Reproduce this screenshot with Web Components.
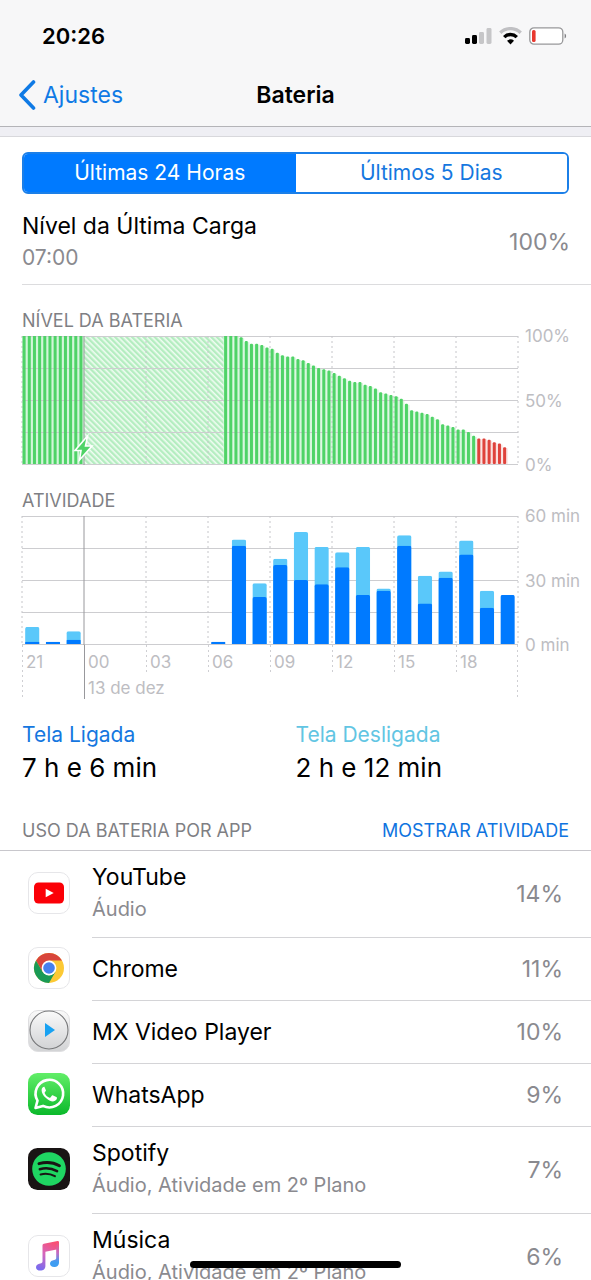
<!DOCTYPE html>
<html lang="pt-BR">
<head>
<meta charset="utf-8">
<meta name="viewport" content="width=device-width, initial-scale=1">
<title>Bateria</title>
<style>
  body { margin: 0; background: #fff; color: #000; font-family: Inter, "Liberation Sans", sans-serif; }
</style>
</head>
<body>
<battery-screen></battery-screen>

<template id="battery-screen">
  <style>
    :host { display: flex; flex-direction: column; height: 100vh; overflow: hidden; }
    main { flex: 1; min-height: 0; overflow-y: auto; scrollbar-width: none; }
    .band { height: 9px; background: #efeff4; border-bottom: 1px solid #d8d8dc; }
    .seg { padding: 15px 22px 0; }
    .section-head { display: flex; justify-content: space-between; align-items: baseline; padding: 32px 22px 7px; border-bottom: 1px solid #c8c7cc; }
    h2, .section-head button { margin: 0; font: 400 18px/24px Inter, "Liberation Sans", sans-serif; color: #7f7f84; }
    .section-head button { padding: 0; border: 0; background: none; color: #0f74e0; }
    .totals { display: grid; grid-template-columns: 1fr 1fr; padding: 22px 22px 0; }
    .home { position: fixed; bottom: 12px; left: 0; right: 0; margin: 0 auto; width: 211px; height: 7px; border-radius: 4px; background: #000; }
  </style>
  <nav-header></nav-header>
  <main>
    <div class="band"></div>
    <div class="seg"><segmented-control></segmented-control></div>
    <charge-summary><span slot="title">Nível da Última Carga</span><span slot="time">07:00</span><span slot="value">100%</span></charge-summary>
    <level-chart></level-chart>
    <activity-chart></activity-chart>
    <div class="totals">
      <usage-total tone="on"><span slot="label">Tela Ligada</span>7 h e 6 min</usage-total>
      <usage-total tone="off"><span slot="label">Tela Desligada</span>2 h e 12 min</usage-total>
    </div>
    <div class="section-head"><h2>USO DA BATERIA POR APP</h2><button type="button">MOSTRAR ATIVIDADE</button></div>
    <div role="list">
      <app-row role="listitem"><app-icon slot="icon" name="youtube"></app-icon>YouTube<span slot="detail">Áudio</span><span slot="value">14%</span></app-row>
      <app-row role="listitem"><app-icon slot="icon" name="chrome"></app-icon>Chrome<span slot="value">11%</span></app-row>
      <app-row role="listitem"><app-icon slot="icon" name="mx"></app-icon>MX Video Player<span slot="value">10%</span></app-row>
      <app-row role="listitem"><app-icon slot="icon" name="whatsapp"></app-icon>WhatsApp<span slot="value">9%</span></app-row>
      <app-row role="listitem"><app-icon slot="icon" name="spotify"></app-icon>Spotify<span slot="detail">Áudio, Atividade em 2º Plano</span><span slot="value">7%</span></app-row>
      <app-row role="listitem"><app-icon slot="icon" name="music"></app-icon>Música<span slot="detail">Áudio, Atividade em 2º Plano</span><span slot="value">6%</span></app-row>
    </div>
  </main>
  <div class="home"></div>
</template>

<template id="nav-header">
  <style>
    :host { display: block; background: #f7f7f8; border-bottom: 1px solid #b4b4b8; padding-bottom: 8px; }
    .status { display: flex; justify-content: space-between; align-items: center; height: 72px; padding: 0 24px 0 42px; }
    time { font-size: 22px; font-weight: 600; }
    .signals { display: flex; align-items: center; gap: 7px; }
    svg { display: block; }
    nav { display: grid; grid-template-columns: 1fr auto 1fr; align-items: center; height: 46px; padding: 0 19px; }
    a { display: flex; align-items: center; gap: 7px; color: #0f7ae5; text-decoration: none; font-size: 23px; }
    h1 { margin: 0; font-size: 23px; font-weight: 600; }
  </style>
  <div class="status">
    <time>20:26</time>
    <div class="signals">
      <svg width="27" height="18" viewBox="0 0 27 18" role="img" aria-label="Sinal">
        <rect x="0" y="11" width="5" height="6" rx="1.4"/><rect x="7" y="8" width="5" height="9" rx="1.4"/>
        <rect x="14" y="5" width="5" height="12" rx="1.4" fill="#c6c6c8"/><rect x="21.5" y="1" width="5" height="16" rx="1.4" fill="#c6c6c8"/>
      </svg>
      <svg width="23" height="18" viewBox="0 0 23 18" fill="none" role="img" aria-label="Wi-Fi">
        <path d="M1.3 5.8a14.6 14.6 0 0 1 20.4 0" stroke="#c0c0c3" stroke-width="3.4"/>
        <path d="M5.2 10.1a9 9 0 0 1 12.6 0" stroke="#000" stroke-width="3.4"/>
        <path d="M11.5 17.4 8 13.8a5 5 0 0 1 7 0z" fill="#000"/>
      </svg>
      <svg width="38" height="18" viewBox="0 0 38 18" role="img" aria-label="Bateria fraca">
        <rect x=".8" y=".8" width="33" height="16.4" rx="4.2" fill="#fff" stroke="#98989a" stroke-width="1.3"/>
        <rect x="3" y="3" width="3.6" height="12" rx="1.6" fill="#e8382f"/>
        <path d="M35.6 6.5c2 .8 2 4.200 0 5z" fill="#808084"/>
      </svg>
    </div>
  </div>
  <nav>
    <a href="#ajustes"><svg width="17" height="30" viewBox="0 0 17 30" fill="none" stroke="#0f7ae5" stroke-width="3.600" stroke-linecap="round" stroke-linejoin="round"><path d="M14.500 2 2 15l12.500 13"/></svg>Ajustes</a>
    <h1>Bateria</h1>
  </nav>
</template>

<template id="segmented-control">
  <style>
    :host { display: grid; grid-template-columns: 1fr 1fr; border: 2px solid #1b7fe8; border-radius: 6px; overflow: hidden; }
    button { border: 0; margin: 0; padding: 0; height: 38px; background: #fff; color: #1577e0; font: 400 21px/38px Inter, "Liberation Sans", sans-serif; }
    button[aria-selected="true"] { background: #007aff; color: #fff; }
  </style>
  <button type="button" role="tab" aria-selected="true">Últimas 24 Horas</button>
  <button type="button" role="tab" aria-selected="false">Últimos 5 Dias</button>
</template>

<template id="charge-summary">
  <style>
    :host { display: grid; grid-template-columns: 1fr auto; align-items: center; margin-left: 22px; padding: 16px 21px 10px 0; border-bottom: 1px solid #dcdcde; line-height: 32px; color: #8a8a8f; font-size: 23px; }
    .title { color: #000; }
    .time { font-size: 21px; }
  </style>
  <div><div class="title"><slot name="title"></slot></div><div class="time"><slot name="time"></slot></div></div>
  <slot name="value"></slot>
</template>

<template id="chart-frame">
  <style>
    :host { display: block; padding: 24px 0 0 22px; }
    h2 { margin: 0 0 3px; font-size: 18px; line-height: 24px; font-weight: 400; color: #7f7f84; }
    .frame { display: grid; grid-template-columns: 1fr 73px; }
    .plot { display: block; width: 100%; height: 129px; overflow: visible; }
    .scale { display: flex; flex-direction: column; justify-content: space-between; margin: -10px 0; padding-left: 7px; }
    .scale, .ticks { color: #bdbdc2; font-size: 17px; line-height: 20px; white-space: nowrap; }
    .ticks { display: grid; grid-template-columns: repeat(8, minmax(0, 1fr)); align-items: start; height: 54px; }
    .ticks, .tick { background: repeating-linear-gradient(#cfcfd3 0 2px, transparent 2px 5px) left top / 1px 100% no-repeat; }
    .ticks { background-position: right top; }
    .tick { box-sizing: border-box; height: 30px; padding: 7px 0 0 4px; }
    .tick.long { height: 54px; }
    .tick.solid { background: linear-gradient(#98989c, #98989c) left top / 1px 100% no-repeat; }
    .date { display: block; margin-top: 6px; }
  </style>
  <h2></h2>
  <div class="frame">
    <svg class="plot" role="img"></svg>
    <div class="scale"></div>
  </div>
</template>

<template id="usage-total">
  <style>
    :host { display: block; font-size: 26px; line-height: 38px; }
    .label { font-size: 21px; line-height: 28px; color: #1577e0; }
    :host([tone="off"]) .label { color: #62c5e3; }
  </style>
  <div class="label"><slot name="label"></slot></div>
  <slot></slot>
</template>

<template id="app-row">
  <style>
    :host { display: grid; grid-template-columns: 92px 1fr; align-items: center; font-size: 23px; line-height: 32px; }
    .icon { padding: 0 0 3px 28px; }
    .body { display: grid; grid-template-columns: 1fr auto; align-items: center; min-height: 62px; padding-right: 28px; border-bottom: 1px solid #d4d4d7; }
    .text { padding: 10px 0; }
    ::slotted([slot="detail"]) { display: block; padding-bottom: 2px; font-size: 20px; color: #8a8a8f; }
    .value { color: #8a8a8f; }
  </style>
  <div class="icon"><slot name="icon"></slot></div>
  <div class="body"><div class="text"><slot></slot><slot name="detail"></slot></div><div class="value"><slot name="value"></slot></div></div>
</template>

<script>
  const attach = (el, id) => {
    const root = el.attachShadow({ mode: "open" });
    root.append(document.getElementById(id).content.cloneNode(true));
    return root;
  };

  for (const name of ["nav-header", "segmented-control", "charge-summary", "usage-total", "app-row", "battery-screen"]) {
    customElements.define(name, class extends HTMLElement {
      constructor() { super(); attach(this, name); }
    });
  }

  const BASE = 128;
  const pct = n => (n * 100).toFixed(3) + "%";

  function gridLines() {
    let s = "";
    for (let i = 0; i <= 4; i++) s += `<line x1="0" x2="100%" y1="${i * 32 + .5}" y2="${i * 32 + .5}" stroke="#cdcdd0"/>`;
    for (let i = 0; i <= 8; i++) {
      s += i === 1
        ? `<line x1="12.5%" x2="12.5%" y1="0" y2="129" stroke="#98989c"/>`
        : `<line x1="${i * 12.5}%" x2="${i * 12.5}%" y1="0" y2="129" stroke="#c6c6ca" stroke-dasharray="2 3"/>`;
    }
    return s;
  }

  class ChartFrame extends HTMLElement {
    build(title, scale, plot) {
      const root = attach(this, "chart-frame");
      root.querySelector("h2").textContent = title;
      const svg = root.querySelector(".plot");
      svg.setAttribute("aria-label", title);
      svg.innerHTML = plot;
      root.querySelector(".scale").innerHTML = scale.map(t => `<span>${t}</span>`).join("");
      return root;
    }
  }

  customElements.define("level-chart", class extends ChartFrame {
    constructor() {
      super();
      const before = Array(12).fill(100);
      const after = [100, 100, 100, 99, 96, 94, 94, 93, 91, 90, 87, 85, 84, 84, 82, 81, 79, 77, 75, 74, 73, 71, 69, 67, 65, 64, 64, 62, 61, 59, 56, 55, 54, 53, 51, 47, 42, 41, 40, 39, 37, 35, 31, 30, 29, 27, 27, 25, 22, 20, 20, 19, 17, 16, 13];
      const bar = (v, i) => {
        const h = BASE * v / 100;
        return `<rect x="${pct((i + .12) / 96)}" y="${BASE - h}" width="3" height="${h}" rx="${v < 100 ? 1 : 0}" fill="${v > 20 ? "#4fd367" : "#df423b"}"/>`;
      };
      const plot = `
        <defs><pattern id="hatch" width="4" height="4" patternUnits="userSpaceOnUse" patternTransform="rotate(-45)">
          <rect width="4" height="4" fill="#f0fcf2"/><rect width="2.4" height="4" fill="#b4edc0"/></pattern></defs>
        <rect width="12.5%" height="128" fill="#d2f6d9"/>
        <rect x="12.5%" width="28.2%" height="128" fill="url(#hatch)"/>
        ${after.map((v, i) => `<rect x="${pct((i + 39) / 96)}" y="${BASE - BASE * v / 100 + 1}" width="1.042%" height="${BASE * v / 100 - 1}" fill="${v > 20 ? "#d8f7de" : "#fae0de"}"/>`).join("")}
        ${gridLines()}
        ${before.map((v, i) => bar(v, i)).join("")}
        ${after.map((v, i) => bar(v, i + 39)).join("")}
        <svg x="12.5%" y="100" width="1" height="1" overflow="visible">
          <path d="M3.500 0-9 14.500h6L-4.500 24 8 10H1.500z" fill="#4fd367" stroke="#fff" stroke-width="1.6"/>
        </svg>`;
      this.build("NÍVEL DA BATERIA", ["100%", "50%", "0%"], plot);
    }
  });

  customElements.define("activity-chart", class extends ChartFrame {
    constructor() {
      super();
      // hour slot -> [minutes in total, minutes with the screen on]
      const use = { 0: [8, 1], 1: [1, 1], 2: [6, 2], 9: [1, 1], 10: [49, 46], 11: [28.5, 22], 12: [40, 37], 13: [52.5, 30], 14: [45.5, 28], 15: [43, 36], 16: [45.5, 23], 17: [26, 25], 18: [51, 46], 19: [32, 19], 20: [34, 31], 21: [48.5, 42], 22: [25, 17], 23: [23, 23] };
      const block = (x, v, fill) => {
        const h = v * BASE / 60, r = v > 5 ? 2 : 1;
        return `<svg x="${x}" y="${BASE - h}" width="2.9%" height="${h}"><rect width="100%" height="${h + 4}" rx="${r}" fill="${fill}"/></svg>`;
      };
      let bars = "";
      for (const [i, [total, on]] of Object.entries(use)) {
        const x = pct((Number(i) + .15) / 24);
        if (total > on) bars += block(x, total, "#5ac8fa");
        bars += block(x, on, "#007aff");
      }
      const root = this.build("ATIVIDADE", ["60 min", "30 min", "0 min"], gridLines() + bars);
      const ticks = document.createElement("div");
      ticks.className = "ticks";
      ticks.innerHTML = ["21", "00", "03", "06", "09", "12", "15", "18"].map((t, i) =>
        `<div class="tick${i < 2 ? " long" : ""}${i === 1 ? " solid" : ""}">${t}${i === 1 ? '<span class="date">13 de dez</span>' : ""}</div>`).join("");
      root.querySelector(".frame").append(ticks);
    }
  });

  const tile = '<rect x=".5" y=".5" width="41" height="41" rx="9.500" fill="#fff" stroke="#e6e6e9"/>';
  const ICONS = {
    youtube: tile + '<rect x="6" y="10.500" width="30" height="21" rx="4.500" fill="#fb0007"/><path d="M17.700 16.800v8.400l8-4.200z" fill="#fff"/>',
    chrome: tile + `<g transform="translate(21 21)">
      <circle r="15" fill="#fcc934"/>
      <path d="M-13-7.500A15 15 0 0 1 13-7.500H0L-6.500 3.750z" fill="#d8453b"/>
      <path d="M-13-7.500A15 15 0 0 0 0 15L6.500 3.750 0 7.500-6.500 3.750z" fill="#1a9a55"/>
      <circle r="7.400" fill="#fff"/><circle r="5.800" fill="#4680ee"/></g>`,
    mx: `<defs><linearGradient id="g" x2="0" y2="1"><stop stop-color="#fafafa"/><stop offset="1" stop-color="#d2d3d5"/></linearGradient></defs>
      <rect x=".5" y=".5" width="41" height="41" rx="9.500" fill="url(#g)" stroke="#dedee0"/>
      <circle cx="21" cy="20" r="19" fill="url(#g)" stroke="#77787a" stroke-width="1.100"/><path d="M17 13v14l10-7z" fill="#18a2f2"/>`,
    whatsapp: `<defs><linearGradient id="g" x2="0" y2="1"><stop stop-color="#62ee68"/><stop offset="1" stop-color="#0bb92b"/></linearGradient></defs>
      <rect width="42" height="42" rx="9.500" fill="url(#g)"/>
      <path d="M7.500 35 9.500 27.700A13.800 13.800 0 1 1 15 32.900z" fill="none" stroke="#fff" stroke-width="2.600" stroke-linejoin="round"/>
      <path d="M16.300 13.800c-1.500 0-2.700 1.400-2.700 3.400 0 5.400 7.200 11.200 11.400 11.200 2 0 4-1.600 4-3.300 0-.8-.4-1-1.200-1.400l-2.700-1.200c-.8-.4-1.200 0-1.700.7l-1 1.200c-.4.500-.8.400-1.400.1-1.800-.9-3.200-2.300-4.200-4.100-.3-.6-.2-.9.200-1.300.9-1 1.100-1.300.8-2l-1.100-2.700c-.2-.5-.3-.6-.4-.6z" fill="#fff"/>`,
    spotify: `<rect width="42" height="42" rx="9.500" fill="#191414"/><circle cx="21" cy="21" r="16.800" fill="#1fd662"/>
      <g fill="none" stroke="#191414" stroke-linecap="round"><path d="M11 15.600c7-1.900 14.600-1.200 20.400 2.100" stroke-width="3"/><path d="M11.800 21.200c6-1.600 12-.9 17.300 2" stroke-width="2.500"/><path d="M12.600 26.400c5-1.200 10-.6 14.300 1.800" stroke-width="2.100"/></g>`,
    music: `<defs><linearGradient id="g" x1=".7" x2=".3" y2="1"><stop stop-color="#fb4f72"/><stop offset=".5" stop-color="#d466bd"/><stop offset="1" stop-color="#7a6bee"/></linearGradient>
      <linearGradient id="h" x2="0" y2="1"><stop stop-color="#fb4f72"/><stop offset=".45" stop-color="#c06cc4"/><stop offset=".8" stop-color="#3f9df2"/></linearGradient></defs>${tile}
      <path d="M14.500 10.500q0-1.500 1.400-1.800L29.500 6q1.500-.2 1.500 1.200V14l-13.600 2.700V31c0 3-2.200 4.600-5 4.600-2.600 0-4.400-1.200-4.400-3.400 0-2.400 1.900-3.300 4.200-3.800 1.600-.4 2.300-.7 2.300-2z" fill="url(#g)"/>
      <path d="M28.200 7.500 31 7v20.400c0 3-2.200 4.600-4.800 4.600s-4.200-1.300-4.200-3.400c0-2.400 1.900-3.300 4.100-3.700 1.600-.4 2.100-.7 2.100-2z" fill="url(#h)"/>`
  };

  customElements.define("app-icon", class extends HTMLElement {
    constructor() {
      super();
      this.attachShadow({ mode: "open" }).innerHTML =
        `<style>:host{display:block;width:42px;height:42px}svg{display:block}</style><svg width="42" height="42" viewBox="0 0 42 42" aria-hidden="true">${ICONS[this.getAttribute("name")]}</svg>`;
    }
  });
</script>
</body>
</html>
